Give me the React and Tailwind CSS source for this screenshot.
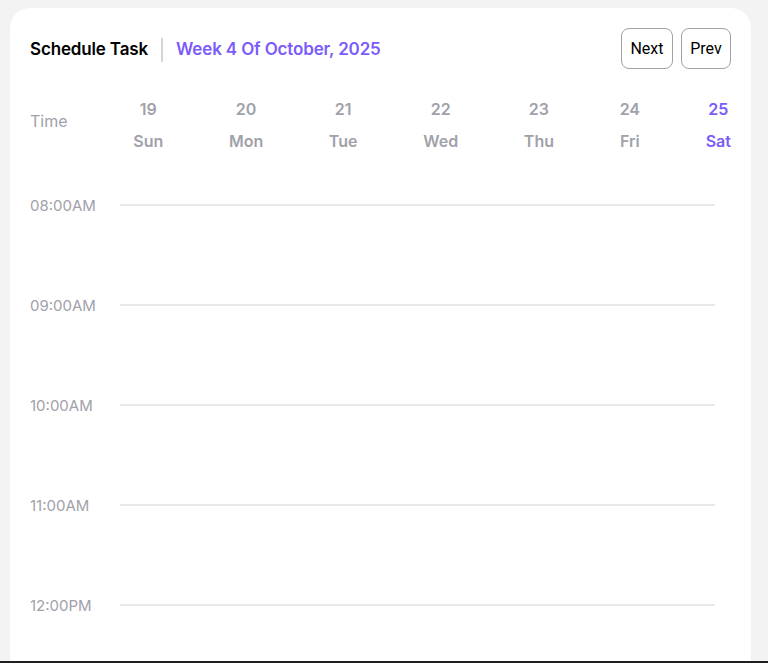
// App.jsx
const days = [
  { num: 19, name: "Sun" },
  { num: 20, name: "Mon" },
  { num: 21, name: "Tue" },
  { num: 22, name: "Wed" },
  { num: 23, name: "Thu" },
  { num: 24, name: "Fri" },
  { num: 25, name: "Sat", active: true },
];

const hours = ["08:00AM", "09:00AM", "10:00AM", "11:00AM", "12:00PM"];

const App = () => {
  return (
    <div className="flex h-[663px] flex-col overflow-hidden bg-[#f3f3f3] font-['Inter',sans-serif]">
      <div className="flex-1 overflow-hidden pl-[10px] pr-[17px] pt-[8px]">
        {/* Card */}
        <div className="h-full rounded-t-[20px] bg-white px-[20px] pt-[20px]">
          {/* Header */}
          <div className="flex h-[41px] items-center justify-between">
            <div className="flex items-center pt-[2px]">
              <h2 className="text-[17px] font-semibold tracking-[-0.15px] text-black">Schedule Task</h2>
              <span className="mx-[13px] h-[24px] w-[2px] bg-[#d4d4d8]" />
              <span className="text-[17px] font-semibold tracking-[-0.15px] text-[#7b5cfa]">
                Week 4 Of October, 2025
              </span>
            </div>
            <div className="flex gap-2 font-['Roboto',sans-serif]">
              <button className="h-[41px] w-[52px] rounded-[8px] border border-[#a1a1aa] text-[16px] text-black">
                Next
              </button>
              <button className="h-[41px] w-[50px] rounded-[8px] border border-[#a1a1aa] text-[16px] text-black">
                Prev
              </button>
            </div>
          </div>

          {/* Days row */}
          <div className="mt-[28px] flex items-start justify-between">
            <span className="mt-[12px] text-[16px] leading-6 text-[#a1a1aa]">Time</span>
            {days.map((d) => (
              <div
                key={d.num}
                className={`flex flex-col items-center gap-2 text-[16px] font-semibold leading-6 ${
                  d.active ? "text-[#7b5cfa]" : "text-[#a1a1aa]"
                }`}
              >
                <span>{d.num}</span>
                <span>{d.name}</span>
              </div>
            ))}
          </div>

          {/* Time grid */}
          <div className="mt-[40px]">
            {hours.map((h) => (
              <div key={h} className="flex h-[100px] items-start">
                <span className="w-[90px] pt-[1px] text-[15px] leading-6 text-[#a1a1aa]">{h}</span>
                <div className="mr-[16px] mt-[11px] h-[2px] flex-1 bg-[#e8e8ec]" />
              </div>
            ))}
          </div>
        </div>
      </div>
      <div className="h-[2px] bg-[#1f1f1f]" />
    </div>
  );
};

export default App;
